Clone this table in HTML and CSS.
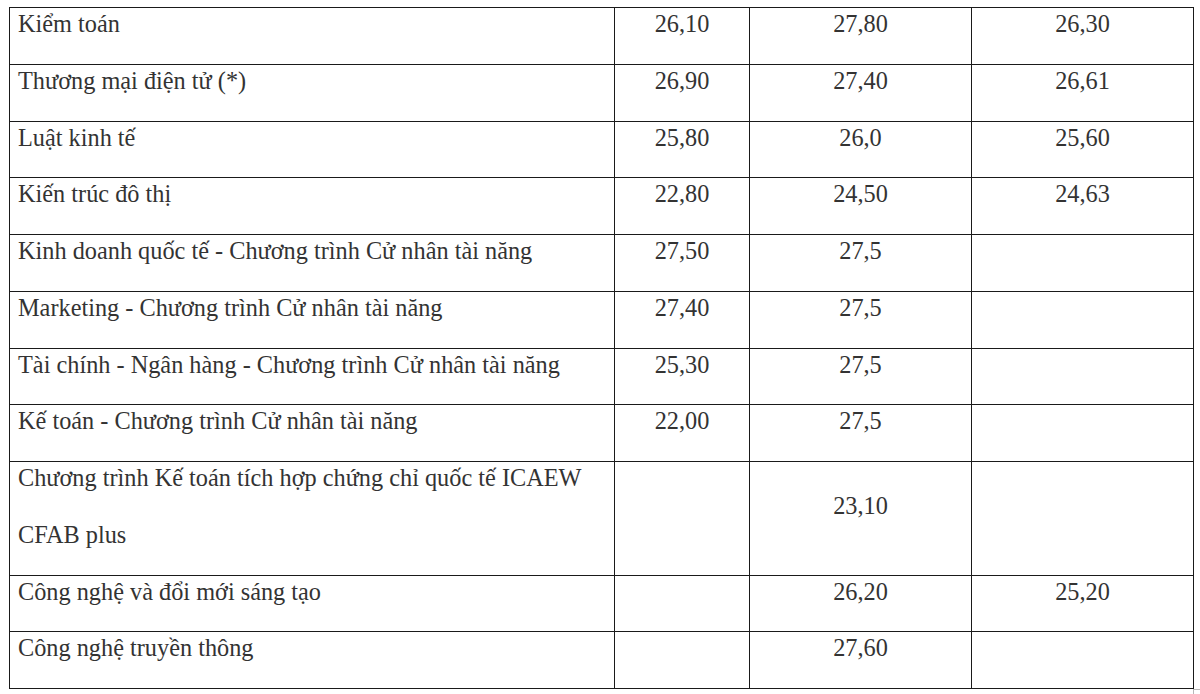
FILE: index.html
```html
<!DOCTYPE html>
<html lang="vi">
<head>
<meta charset="utf-8">
<title>Điểm chuẩn</title>
<link rel="stylesheet" href="styles.css">
</head>
<body>
<div class="page">
<table class="scores">
  <colgroup>
    <col class="c-name"><col class="c-num"><col class="c-mid"><col class="c-last">
  </colgroup>
  <tbody>
    <tr><td class="name"><p>Kiểm toán</p></td><td><p>26,10</p></td><td><p>27,80</p></td><td><p>26,30</p></td></tr>
    <tr><td class="name"><p>Thương mại điện tử (*)</p></td><td><p>26,90</p></td><td><p>27,40</p></td><td><p>26,61</p></td></tr>
    <tr><td class="name"><p>Luật kinh tế</p></td><td><p>25,80</p></td><td><p>26,0</p></td><td><p>25,60</p></td></tr>
    <tr><td class="name"><p>Kiến trúc đô thị</p></td><td><p>22,80</p></td><td><p>24,50</p></td><td><p>24,63</p></td></tr>
    <tr><td class="name"><p>Kinh doanh quốc tế - Chương trình Cử nhân tài năng</p></td><td><p>27,50</p></td><td><p>27,5</p></td><td><p></p></td></tr>
    <tr><td class="name"><p>Marketing - Chương trình Cử nhân tài năng</p></td><td><p>27,40</p></td><td><p>27,5</p></td><td><p></p></td></tr>
    <tr><td class="name"><p>Tài chính - Ngân hàng - Chương trình Cử nhân tài năng</p></td><td><p>25,30</p></td><td><p>27,5</p></td><td><p></p></td></tr>
    <tr><td class="name"><p>Kế toán - Chương trình Cử nhân tài năng</p></td><td><p>22,00</p></td><td><p>27,5</p></td><td><p></p></td></tr>
    <tr><td class="name"><p>Chương trình Kế toán tích hợp chứng chỉ quốc tế ICAEW CFAB plus</p></td><td><p></p></td><td class="middle"><p>23,10</p></td><td><p></p></td></tr>
    <tr><td class="name"><p>Công nghệ và đổi mới sáng tạo</p></td><td><p></p></td><td><p>26,20</p></td><td><p>25,20</p></td></tr>
    <tr><td class="name"><p>Công nghệ truyền thông</p></td><td><p></p></td><td><p>27,60</p></td><td><p></p></td></tr>
  </tbody>
</table>
<div class="grip"></div>
</div>
</body>
</html>
```

FILE: styles.css
```css
html, body {
  margin: 0;
  padding: 0;
  background: #ffffff;
}

.page {
  padding: 7px 0 0 9px;
}

.scores {
  border-collapse: collapse;
  table-layout: fixed;
  width: 1184px;
  font-family: "Liberation Serif", "Times New Roman", serif;
  font-size: 24.3px;
  color: #333333;
}

.c-name { width: 605px; }
.c-num { width: 135px; }
.c-mid { width: 222px; }
.c-last { width: 222px; }

.scores td {
  border: 1px solid #1a1a1a;
  padding: 0 8px 11px 8px;
  vertical-align: top;
  text-align: center;
}

.scores td.name {
  text-align: left;
}

.scores td.middle {
  vertical-align: middle;
}

.scores p {
  margin: -12px 0 0 0;
  line-height: 56.75px;
  min-height: 56.75px;
}

.grip {
  width: 7px;
  height: 5px;
  margin: 0 0 0 1184px;
  border-left: 1px solid #b8b8b8;
  border-top: 1px solid #b8b8b8;
}
```
